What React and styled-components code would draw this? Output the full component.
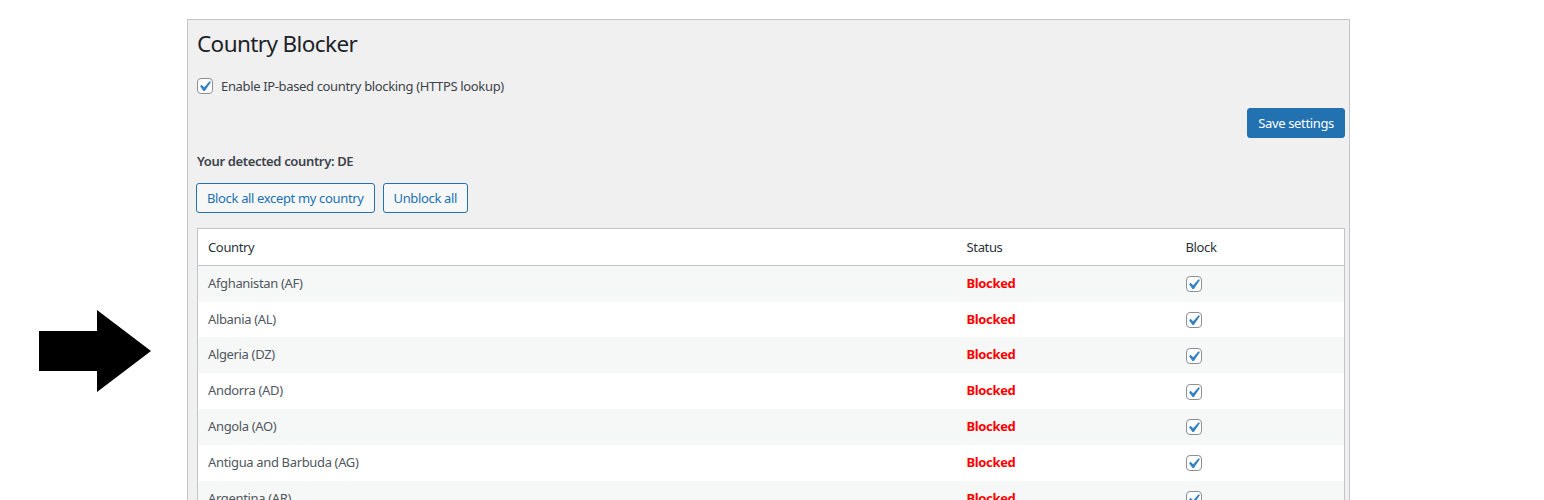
import React from 'react'
import styled, { createGlobalStyle } from 'styled-components'

const GlobalStyle = createGlobalStyle`
  body {
    margin: 0;
    background: #ffffff;
    font-family: 'Segoe UI', 'Noto Sans', 'Open Sans', sans-serif;
    font-size: 13px;
    letter-spacing: -0.35px;
    color: #3c434a;
  }
`

const Page = styled.div`
  display: flex;
  align-items: flex-start;
  padding-top: 19px;
  height: 481px;
  overflow: hidden;
`

const ArrowColumn = styled.div`
  flex: 0 0 187px;
  padding: 291px 0 0 39px;
  box-sizing: border-box;
  svg {
    display: block;
  }
`

const Panel = styled.div`
  width: 1149px;
  background: #f0f0f1;
  border: 1px solid #c3c4c7;
  border-bottom: none;
  padding: 0 4px 40px 8px;
  min-height: 520px;
`

const Title = styled.h1`
  font-size: 22.5px;
  font-weight: 400;
  letter-spacing: -0.6px;
  line-height: 1.3;
  margin: 0;
  padding: 9px 0 4px 1px;
  color: #1d2327;
`

const OptionRow = styled.label`
  display: flex;
  align-items: center;
  gap: 8px;
  margin-top: 16px;
  padding-left: 1px;
  height: 16px;
  color: #3c434a;
`

const SaveRow = styled.div`
  display: flex;
  justify-content: flex-end;
  margin-top: 14px;
`

const Button = styled.button`
  font-family: inherit;
  font-size: 13px;
  letter-spacing: inherit;
  height: 30px;
  padding: 0 10px;
  border-radius: 3px;
  border: 1px solid #2271b1;
  cursor: pointer;
  background: ${(p) => (p.$primary ? '#2271b1' : '#f6f7f7')};
  color: ${(p) => (p.$primary ? '#ffffff' : '#2271b1')};
`

const Detected = styled.p`
  margin: 14px 0 0;
  padding-left: 1px;
  font-weight: 600;
  line-height: 19.5px;
  color: #3c434a;
`

const Actions = styled.div`
  display: flex;
  gap: 8px;
  margin-top: 11px;
`

const Table = styled.table`
  width: 1148px;
  margin-top: 15px;
  margin-left: 1px;
  border-collapse: collapse;
  border: 1px solid #c3c4c7;
  background: #ffffff;
  table-layout: fixed;
  th {
    text-align: left;
    font-weight: 400;
    color: #2c3338;
    padding: 8px 10px;
    line-height: 20px;
    border-bottom: 1px solid #c3c4c7;
  }
  td {
    padding: 8px 10px;
    line-height: 19.8px;
    color: #50575e;
    vertical-align: middle;
  }
  tbody tr:nth-child(odd) {
    background: #f6f7f7;
  }
`

const Status = styled.span`
  color: #ff0000;
  font-weight: 700;
`

const Box = styled.span`
  display: inline-flex;
  width: 16px;
  height: 16px;
  box-sizing: border-box;
  border: 1px solid #8c8f94;
  border-radius: 4px;
  background: #ffffff;
  vertical-align: middle;
  position: relative;
  flex: 0 0 auto;
  svg {
    position: absolute;
    left: -4px;
    top: -3px;
  }
`

const Checkbox = () => (
  <Box>
    <svg width="21" height="21" viewBox="0 0 20 20">
      <path d="M14.83 4.89l1.34.94-5.81 8.38H9.02L5.78 9.67l1.34-1.25 2.57 2.4z" fill="#3582c4" />
    </svg>
  </Box>
)

const countries = [
  'Afghanistan (AF)',
  'Albania (AL)',
  'Algeria (DZ)',
  'Andorra (AD)',
  'Angola (AO)',
  'Antigua and Barbuda (AG)',
  'Argentina (AR)',
  'Armenia (AM)',
]

export default function App() {
  return (
    <>
      <GlobalStyle />
      <Page>
        <ArrowColumn>
          <svg width="113" height="83" viewBox="0 0 113 83">
            <polygon points="0,21 58,21 58,0 112,41 58,82 58,61 0,61" fill="#000" />
          </svg>
        </ArrowColumn>
        <Panel>
          <Title>Country Blocker</Title>
          <OptionRow>
            <Checkbox />
            Enable IP-based country blocking (HTTPS lookup)
          </OptionRow>
          <SaveRow>
            <Button $primary>Save settings</Button>
          </SaveRow>
          <Detected>Your detected country: DE</Detected>
          <Actions>
            <Button>Block all except my country</Button>
            <Button>Unblock all</Button>
          </Actions>
          <Table>
            <colgroup>
              <col style={{ width: 759 }} />
              <col style={{ width: 219 }} />
              <col />
            </colgroup>
            <thead>
              <tr>
                <th>Country</th>
                <th>Status</th>
                <th>Block</th>
              </tr>
            </thead>
            <tbody>
              {countries.map((c) => (
                <tr key={c}>
                  <td>{c}</td>
                  <td>
                    <Status>Blocked</Status>
                  </td>
                  <td>
                    <Checkbox />
                  </td>
                </tr>
              ))}
            </tbody>
          </Table>
        </Panel>
      </Page>
    </>
  )
}
